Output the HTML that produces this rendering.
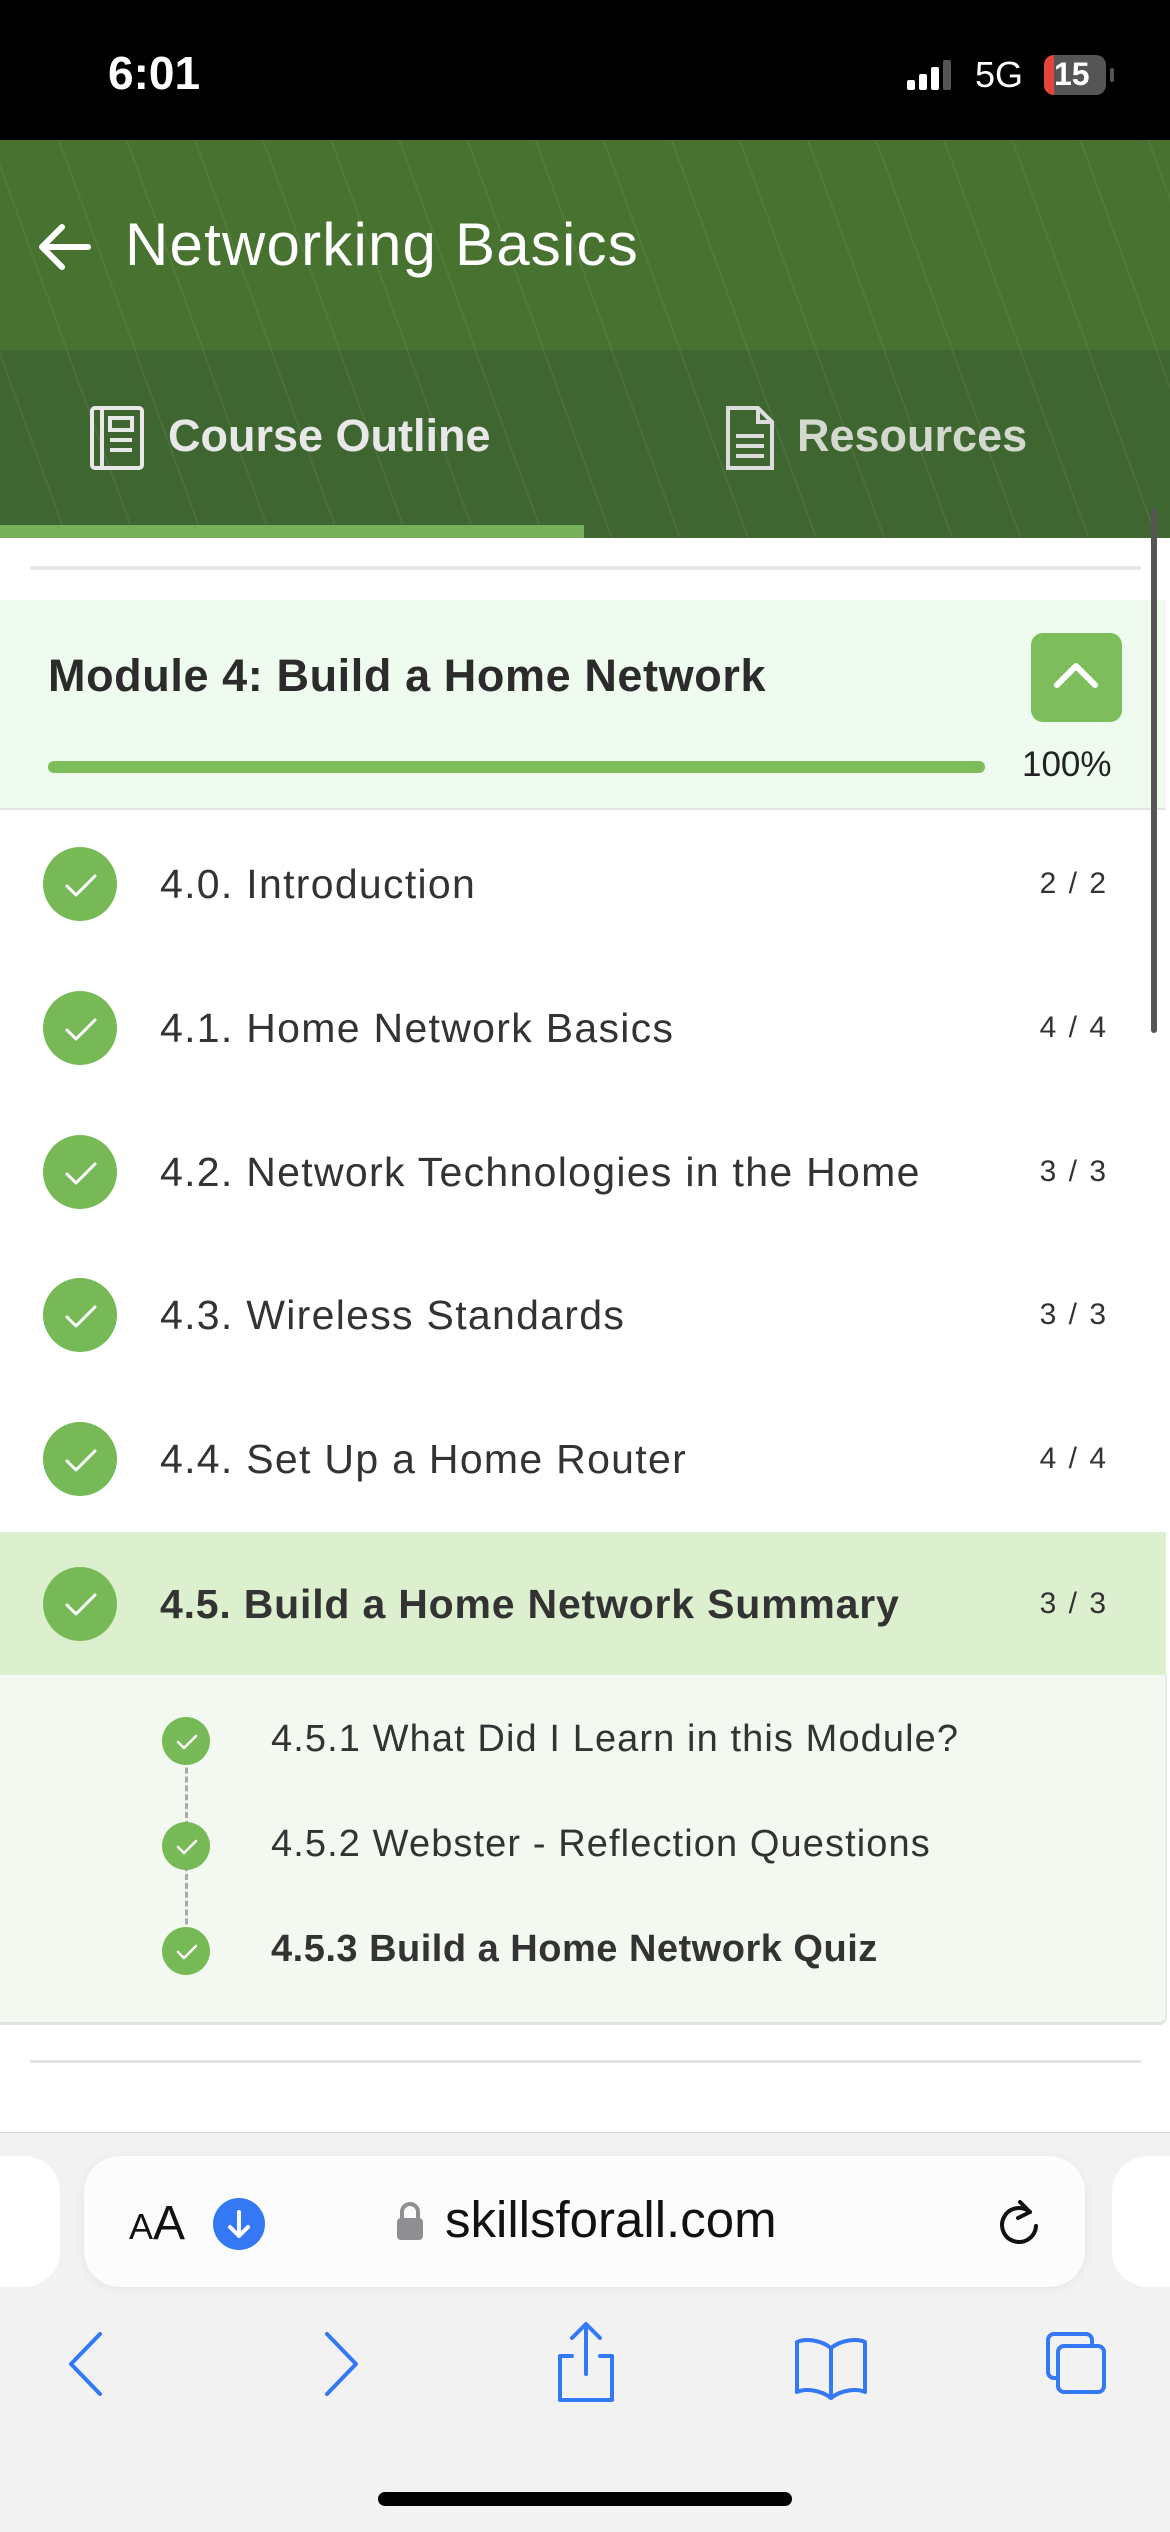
<!DOCTYPE html>
<html><head><meta charset="utf-8"><style>
*{margin:0;padding:0;box-sizing:border-box}
body{width:1170px;height:2532px;position:relative;overflow:hidden;background:#fff;font-family:"Liberation Sans",sans-serif;color:#2b2b2b}
.abs{position:absolute}
.stripes{background-image:repeating-linear-gradient(70deg,rgba(255,255,255,0) 0 62px,rgba(255,255,255,0.06) 62px 64px)}
.row{position:absolute;left:0;width:1166px;height:144px}
.row .c{position:absolute;left:43px;top:35px;width:74px;height:74px;border-radius:50%;background:#77b957}
.row .t{position:absolute;left:160px;top:0;line-height:144px;font-size:41px;letter-spacing:1.3px;color:#333}
.row .n{position:absolute;right:58px;top:0;line-height:144px;font-size:30px;letter-spacing:2px;color:#333}
.sub .c{position:absolute;left:162px;width:48px;height:48px;border-radius:50%;background:#77b957}
.sub .t{position:absolute;left:271px;font-size:38px;letter-spacing:1.1px;color:#333}
</style></head><body>
<div class="abs" style="left:0;top:0;width:1170px;height:140px;background:#000"></div>
<div class="abs" style="left:108px;top:46px;font-size:46px;color:#fff;font-weight:bold">6:01</div>
<svg class="abs" style="left:907px;top:60px" width="46" height="30"><rect x="0" y="20" width="8" height="10" rx="2" fill="#fff"/><rect x="12" y="14" width="8" height="16" rx="2" fill="#fff"/><rect x="24" y="7" width="8" height="23" rx="2" fill="#fff"/><rect x="36" y="0" width="8" height="30" rx="2" fill="#555"/></svg>
<div class="abs" style="left:975px;top:54px;font-size:36px;color:#fff">5G</div>
<div class="abs" style="left:1044px;top:55px;width:62px;height:40px;border-radius:10px;background:#555;overflow:hidden"><div style="width:10px;height:40px;background:#e5453a"></div></div>
<div class="abs" style="left:1110px;top:68px;width:4px;height:14px;border-radius:2px;background:#555"></div>
<div class="abs" style="left:1054px;top:56px;font-size:32px;color:#fff;font-weight:bold">15</div>

<div class="abs stripes" style="left:0;top:140px;width:1170px;height:210px;background-color:#47722f"></div>
<svg class="abs" style="left:36px;top:222px" width="58" height="50"><path d="M52 25H6M26 5L6 25l20 20" stroke="#fff" stroke-width="6" fill="none" stroke-linecap="round" stroke-linejoin="round"/></svg>
<div class="abs" style="left:125px;top:210px;font-size:60px;letter-spacing:1.2px;color:#fff">Networking Basics</div>

<div class="abs stripes" style="left:0;top:350px;width:1170px;height:188px;background-color:#3f6530"></div>
<svg class="abs" style="left:90px;top:406px" width="54" height="64" fill="none" stroke="#e8e8e8" stroke-width="4"><rect x="2" y="2" width="50" height="60" rx="3"/><line x1="12" y1="2" x2="12" y2="62"/><rect x="20" y="12" width="22" height="12"/><line x1="20" y1="34" x2="42" y2="34"/><line x1="20" y1="44" x2="42" y2="44"/></svg>
<div class="abs" style="left:168px;top:410px;font-size:45px;font-weight:bold;color:#e8e8e8">Course Outline</div>
<svg class="abs" style="left:726px;top:406px" width="48" height="64" fill="none" stroke="#ddd" stroke-width="4"><path d="M2 2h30l14 14v46H2z M32 2v14h14"/><line x1="10" y1="30" x2="38" y2="30"/><line x1="10" y1="40" x2="38" y2="40"/><line x1="10" y1="50" x2="38" y2="50"/></svg>
<div class="abs" style="left:797px;top:410px;font-size:45px;font-weight:bold;color:#d4d9d0">Resources</div>
<div class="abs" style="left:0;top:525px;width:584px;height:13px;background:#76b05a"></div>

<div class="abs" style="left:30px;top:566px;width:1111px;height:4px;background:#e6e6e6"></div>
<div class="abs" style="left:0;top:600px;width:1166px;height:210px;background:#effbef;border-bottom:2px solid #e3e3e3"></div>
<div class="abs" style="left:48px;top:650px;font-size:45px;letter-spacing:0.6px;font-weight:bold;color:#2b2b2b">Module 4: Build a Home Network</div>
<div class="abs" style="left:1031px;top:633px;width:91px;height:89px;border-radius:12px;background:#7dbd5c"></div>
<svg class="abs" style="left:1051px;top:655px" width="50" height="40"><path d="M6 30L25 11l19 19" stroke="#fff" stroke-width="6" fill="none" stroke-linecap="round" stroke-linejoin="round"/></svg>
<div class="abs" style="left:48px;top:761px;width:937px;height:12px;border-radius:6px;background:#7dbd5c"></div>
<div class="abs" style="left:1022px;top:745px;font-size:35px;color:#222">100%</div>

<div class="row" style="top:812px"><div class="c"></div><div class="t">4.0. Introduction</div><div class="n">2 / 2</div></div>
<div class="row" style="top:956px"><div class="c"></div><div class="t">4.1. Home Network Basics</div><div class="n">4 / 4</div></div>
<div class="row" style="top:1100px"><div class="c"></div><div class="t">4.2. Network Technologies in the Home</div><div class="n">3 / 3</div></div>
<div class="row" style="top:1243px"><div class="c"></div><div class="t">4.3. Wireless Standards</div><div class="n">3 / 3</div></div>
<div class="row" style="top:1387px"><div class="c"></div><div class="t">4.4. Set Up a Home Router</div><div class="n">4 / 4</div></div>
<div class="row" style="top:1532px;background:#dcf0cf"><div class="c"></div><div class="t" style="font-weight:bold;letter-spacing:0.8px">4.5. Build a Home Network Summary</div><div class="n">3 / 3</div></div>
<svg class="abs" style="left:0;top:0;pointer-events:none" width="1170" height="1700"><g stroke="#fff" stroke-width="3" fill="none" stroke-linecap="round" stroke-linejoin="round">
<path d="M67 886l9 9 19-19"/><path d="M67 1030l9 9 19-19"/><path d="M67 1174l9 9 19-19"/><path d="M67 1317l9 9 19-19"/><path d="M67 1461l9 9 19-19"/><path d="M67 1605l9 9 19-19"/></g></svg>

<div class="abs sub" style="left:0;top:1675px;width:1167px;height:350px;background:#f3f9f1;border-bottom:3px solid #e2e2e2;border-right:2px solid #e8e8e8;border-bottom-right-radius:8px">
<div class="abs" style="left:185px;top:66px;height:210px;border-left:3px dashed #aaa"></div>
<div class="c" style="top:42px"></div><div class="t" style="top:43px">4.5.1 What Did I Learn in this Module?</div>
<div class="c" style="top:147px"></div><div class="t" style="top:148px">4.5.2 Webster - Reflection Questions</div>
<div class="c" style="top:252px"></div><div class="t" style="top:253px;font-weight:bold;letter-spacing:0.5px">4.5.3 Build a Home Network Quiz</div>
<svg class="abs" style="left:0;top:0" width="300" height="320"><g stroke="#fff" stroke-width="2.5" fill="none" stroke-linecap="round" stroke-linejoin="round"><path d="M178 67l6 6 12-12"/><path d="M178 172l6 6 12-12"/><path d="M178 277l6 6 12-12"/></g></svg>
</div>
<div class="abs" style="left:30px;top:2060px;width:1111px;height:3px;background:#e4e4e4"></div>

<div class="abs" style="left:0;top:2132px;width:1170px;height:400px;background:#f2f2f2;border-top:1px solid #d6d6d6"></div>
<div class="abs" style="left:-40px;top:2156px;width:100px;height:131px;border-radius:36px;background:#fff"></div>
<div class="abs" style="left:1112px;top:2156px;width:100px;height:131px;border-radius:36px;background:#fff"></div>
<div class="abs" style="left:84px;top:2156px;width:1001px;height:131px;border-radius:36px;background:#fcfcfc;box-shadow:0 2px 10px rgba(0,0,0,0.06)"></div>
<div class="abs" style="left:129px;top:2196px;color:#111"><span style="font-size:36px">A</span><span style="font-size:48px">A</span></div>
<div class="abs" style="left:213px;top:2198px;width:52px;height:52px;border-radius:50%;background:#3478f6"></div>
<svg class="abs" style="left:213px;top:2198px" width="52" height="52"><path d="M26 14v24M17 29l9 9 9-9" stroke="#fff" stroke-width="4" fill="none" stroke-linecap="round" stroke-linejoin="round"/></svg>
<svg class="abs" style="left:395px;top:2200px" width="30" height="42"><path d="M7 18v-6a8 8 0 0 1 16 0v6" stroke="#8e8e93" stroke-width="4" fill="none"/><rect x="2" y="18" width="26" height="22" rx="4" fill="#8e8e93"/></svg>
<div class="abs" style="left:445px;top:2190px;font-size:51px;color:#111">skillsforall.com</div>
<svg class="abs" style="left:994px;top:2196px" width="50" height="56"><path d="M36 16A17 17 0 1 0 42 30" stroke="#111" stroke-width="4" fill="none" stroke-linecap="round"/><path d="M26 6l10 10-12 6" stroke="#111" stroke-width="4" fill="none" stroke-linecap="round" stroke-linejoin="round"/></svg>

<svg class="abs" style="left:0;top:2320px" width="1170" height="100" fill="none" stroke="#3478f6" stroke-width="4" stroke-linecap="round" stroke-linejoin="round">
<path d="M100 14L71 44l29 30"/>
<path d="M327 14l29 30-29 30"/>
<path d="M572 36h-12v44h52V36h-12M586 54V6M572 18l14-14 14 14"/>
<path d="M831 28c-10-8-26-10-34-6v50c8-4 24-2 34 6c10-8 26-10 34-6V22c-8-4-24-2-34 6zM831 28v50"/>
<rect x="1048" y="14" width="44" height="44" rx="6"/><rect x="1058" y="26" width="46" height="46" rx="6" fill="#f2f2f2"/>
</svg>
<div class="abs" style="left:378px;top:2492px;width:414px;height:14px;border-radius:7px;background:#000"></div>
<div class="abs" style="left:1151px;top:508px;width:6px;height:525px;background:#555;border-radius:3px"></div>
</body></html>
